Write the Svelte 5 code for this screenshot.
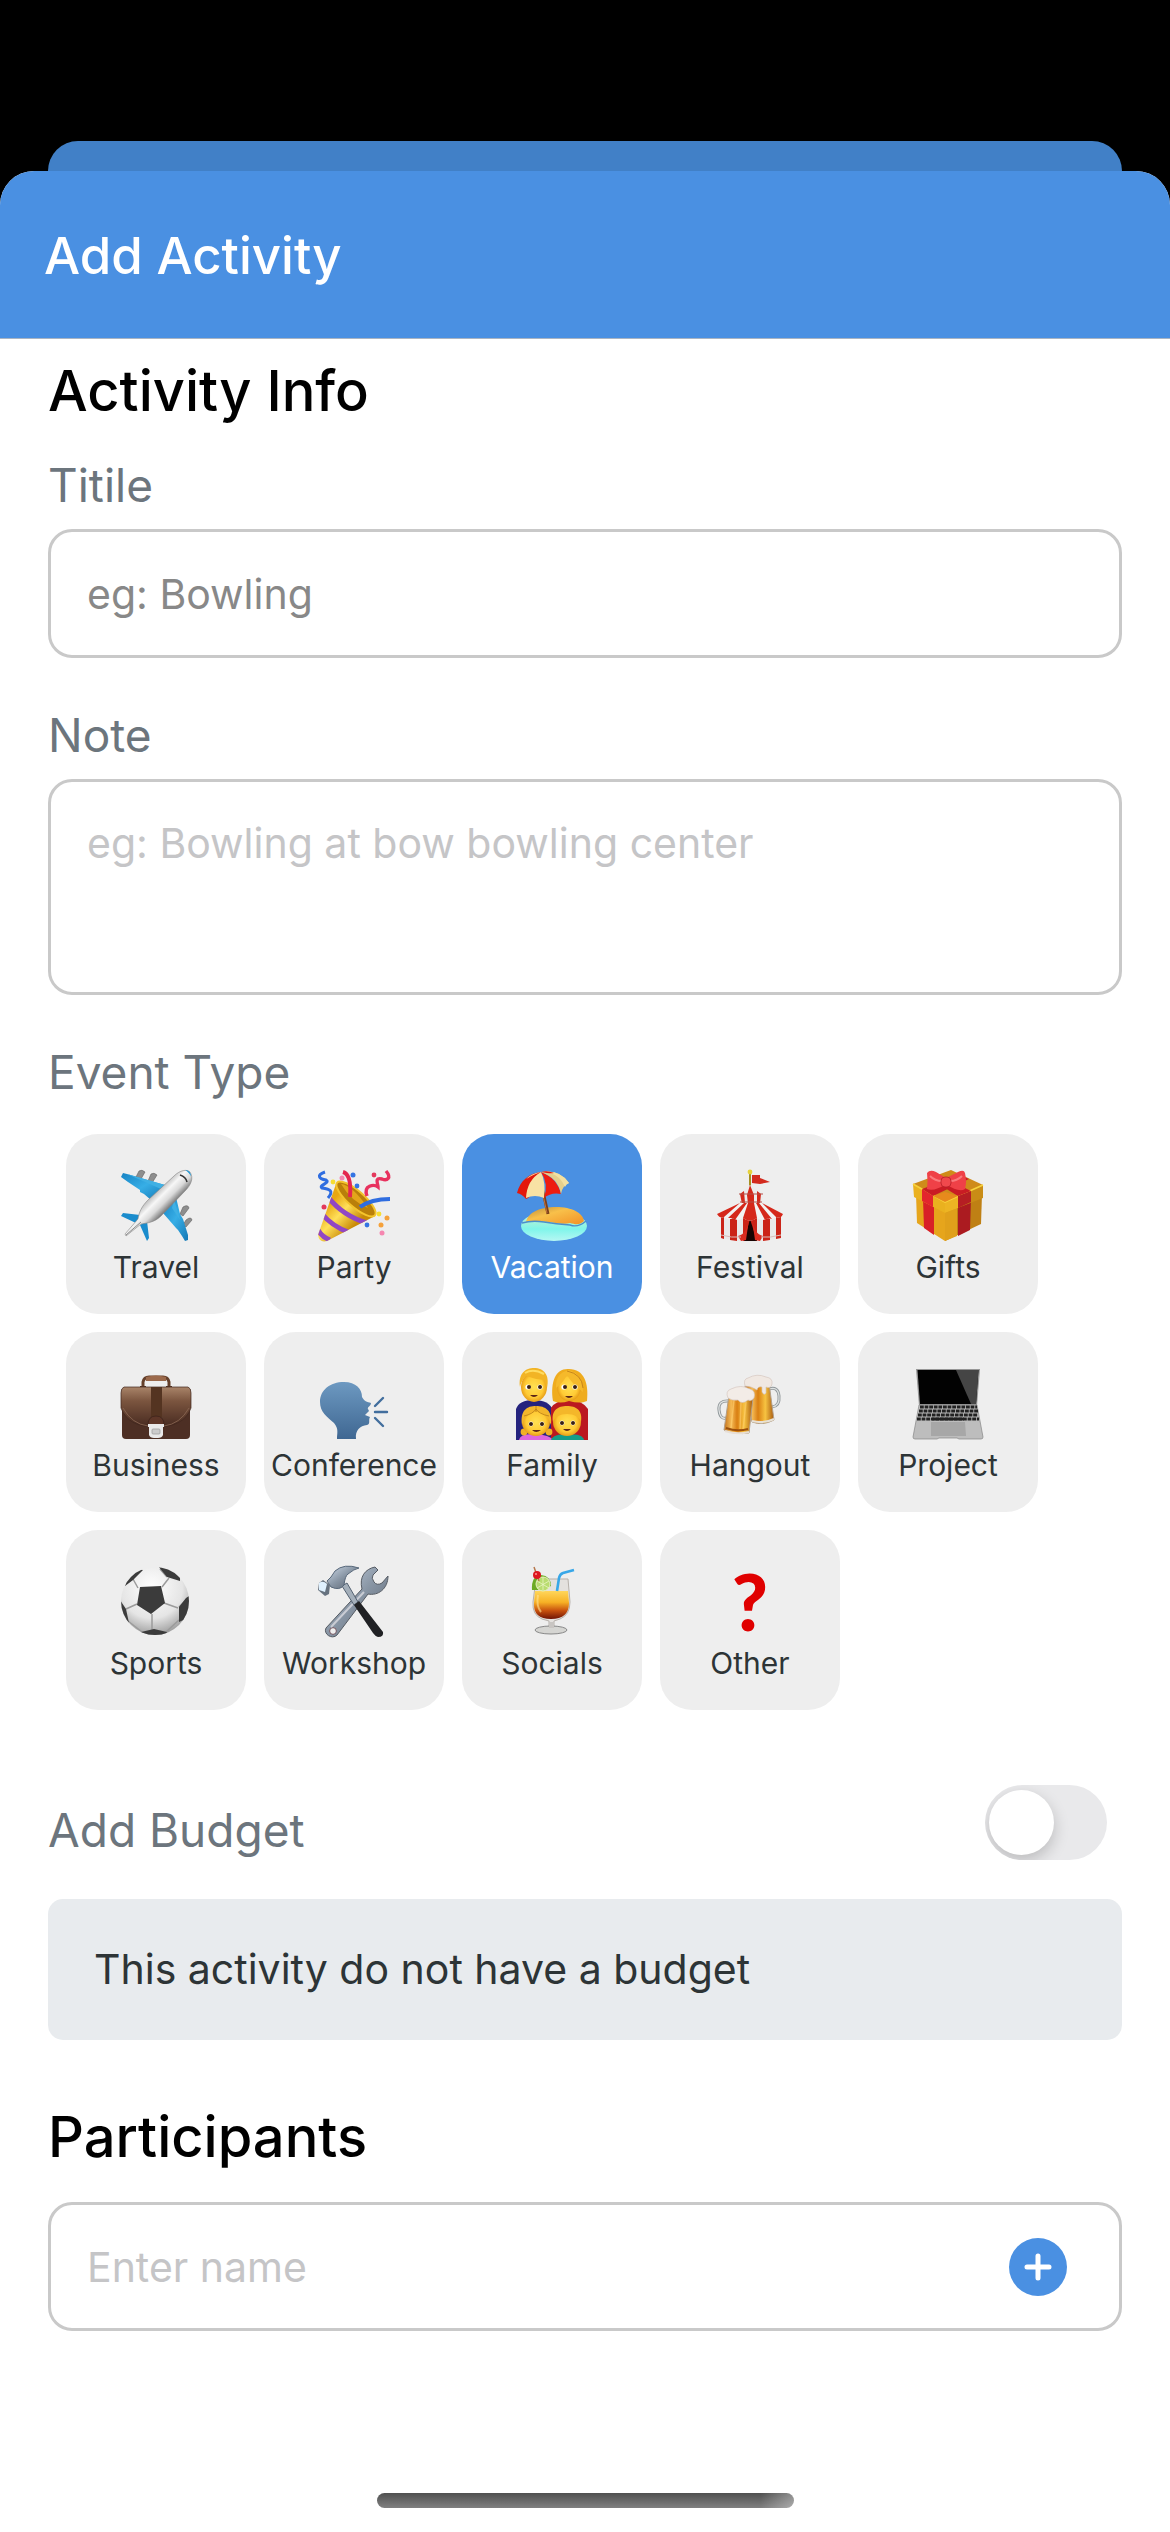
<script>
  const eventTypes = [
    'Travel', 'Party', 'Vacation', 'Festival', 'Gifts',
    'Business', 'Conference', 'Family', 'Hangout', 'Project',
    'Sports', 'Workshop', 'Socials', 'Other'
  ];

  let selected = $state('Vacation');
  let title = $state('');
  let note = $state('');
  let hasBudget = $state(false);
  let participant = $state('');
</script>

{#snippet picture(name)}
  <svg class="picture" viewBox="0 0 72 72" aria-hidden="true">
    {#if name === 'Travel'}
      <defs>
        <linearGradient id="wing" x1="0" y1="0" x2="1" y2="1"><stop offset="0" stop-color="#1683c4" /><stop offset=".5" stop-color="#37aee6" /><stop offset="1" stop-color="#1478b5" /></linearGradient>
        <linearGradient id="hull" gradientUnits="userSpaceOnUse" x1="34" y1="22" x2="50" y2="38"><stop offset="0" stop-color="#b5b5b5" /><stop offset=".35" stop-color="#f7f7f7" /><stop offset=".65" stop-color="#d9d9d9" /><stop offset="1" stop-color="#6e6e6e" /></linearGradient>
      </defs>
      <g fill="#8e8e8e" stroke="#5f5f5f" stroke-width=".6">
        <path d="M16 7 19 1Q22-1 25 2L21 9ZM28 11 31 4Q34 2 37 5L32 13ZM60 44 63 37Q68 34 69 38L63 46ZM63 55 66 50Q71 46 72 50L66 57Z" />
      </g>
      <path d="M1 7 3 3 7 4 45 15 31 30 24 24 20 22 20 20 8 12Z" fill="url(#wing)" />
      <path d="M56 27 60 44 63 49 68 65 68 70 65 71 62 66 58 60 56 58 43 43Z" fill="url(#wing)" />
      <path d="M7 4 45 15 41 19Z" fill="#3fb0e4" />
      <path d="M54 29 60 50 52 38Z" fill="#3fb0e4" />
      <path d="M1 46 3 43 20 45 16 53ZM27 51 29 68 27 71 20 55Z" fill="#1a8ccd" />
      <path d="M70 2C74 8 71 15 65 21L41 46C35 52 28 53 21 54L6 66 5 64 18 49C19 42 22 36 28 30L54 6C60 0 67-1 70 2Z" fill="url(#hull)" stroke="#858585" stroke-width=".6" />
      <path d="M65 0Q71 0 71 7Q70 3 65 0Z" fill="#1793d3" />
      <path d="M60 5Q66 7 67 12" fill="none" stroke="#333" stroke-width="1.6" />
      <path d="m6 65 15-13" stroke="#8b8b8b" />
    {:else if name === 'Party'}
      <defs>
        <linearGradient id="cone" gradientUnits="userSpaceOnUse" x1="12" y1="33" x2="36" y2="56"><stop offset="0" stop-color="#e8a713" /><stop offset=".45" stop-color="#ffe05a" /><stop offset="1" stop-color="#c98a08" /></linearGradient>
        <clipPath id="coneShape"><path d="M18 14 0 65Q1 73 9 71L57 46Z" /></clipPath>
      </defs>
      <path d="M18 14 0 65Q1 73 9 71L57 46Z" fill="url(#cone)" />
      <g clip-path="url(#coneShape)" fill="none" stroke="#9146c4" stroke-width="5">
        <path d="M10 27Q25 46 49 53M4 44Q14 56 30 62M0 60Q4 67 12 70" />
      </g>
      <ellipse cx="38" cy="29" rx="25" ry="8" transform="rotate(41 38 29)" fill="#b97f0a" stroke="#f4c42c" stroke-width="2" />
      <path d="M23 14Q34 15 50 38Q33 31 23 14Z" fill="#e3a51b" />
      <path d="M25 2C32 4 33 14 32 27" fill="none" stroke="#e3274f" stroke-width="4" />
      <path d="M42 37Q53 29 72 29" fill="none" stroke="#2f6de0" stroke-width="4" />
      <path d="M7 2C-2 5 1 9 8 10C13 13 0 15 4 18C12 19 16 21 10 28" fill="none" stroke="#2f6de0" stroke-width="3" />
      <path d="M68 1C74 8 69 11 64 9C56 7 60 14 60 17C56 14 45 15 49 26" fill="none" stroke="#e8315e" stroke-width="3.4" />
      <g fill="#f6dd32"><circle cx="15" cy="12" r="2.4" /><circle cx="61" cy="44" r="2.4" /></g>
      <g fill="#3474e3"><circle cx="35" cy="5" r="2.5" /><circle cx="39" cy="16" r="2.4" /><circle cx="49" cy="55" r="2.4" /></g>
      <g fill="#f5a13a"><circle cx="69" cy="48" r="2.5" /><circle cx="63" cy="55" r="2.5" /></g>
      <g fill="#e3395c"><circle cx="56" cy="5" r="2.4" /><circle cx="6" cy="37" r="2.5" /></g>
      <g fill="#f587b0"><circle cx="24" cy="8" r="2.5" /><circle cx="64" cy="63" r="2.5" /></g>
    {:else if name === 'Vacation'}
      <defs>
        <linearGradient id="sea" x1="0" y1="0" x2="0" y2="1"><stop offset="0" stop-color="#d9efc9" /><stop offset=".6" stop-color="#7ff5ea" /><stop offset="1" stop-color="#b6f7f3" /></linearGradient>
        <linearGradient id="sand" x1="0" y1="0" x2="1" y2="1"><stop offset="0" stop-color="#b98a3a" /><stop offset=".4" stop-color="#f8c04a" /><stop offset="1" stop-color="#f29125" /></linearGradient>
      </defs>
      <ellipse cx="38" cy="56" rx="33" ry="15" fill="url(#sea)" />
      <path d="M10 52C12 42 25 37 40 37C56 37 67 43 68 51C63 56 59 54 54 53C45 56 30 49 10 52Z" fill="url(#sand)" />
      <path d="M6 53Q16 50 28 52T54 55Q62 58 70 51" fill="none" stroke="#4b8ecb" stroke-width="1.4" />
      <path d="m26 17 6 27" stroke="#7b3f1b" stroke-width="3" />
      <path d="m27 25 4 18" stroke="#c2743c" />
      <path d="M1 23C4 11 13 3 25 2Q19 26 10 29Q6 24 1 23Z" fill="#e3170c" />
      <path d="M8 11Q15 3 25 2Q13 6 8 11Z" fill="#f3e0a1" />
      <path d="M25 2Q11 10 10 28Q19 24 28 28Q30 12 25 2Z" fill="#f8e2a4" />
      <path d="M25 2Q33 14 28 28Q35 22 45 24Q41 8 25 2Z" fill="#ed1c10" />
      <path d="M25 2Q42 8 45 24Q46 16 53 13Q44-1 25 2Z" fill="#e5cf8c" />
      <path d="M25 2Q43 2 49 17Q50 14 53 13Q44-1 25 2Z" fill="#f3e0a1" />
      <path d="M25 2Q31 0 38 3 35 4 25 2Z" fill="#e3170c" />
    {:else if name === 'Festival'}
      <path d="M36 2V18" stroke="#a59020" stroke-width="2" />
      <circle cx="36" cy="2" r="2.4" fill="#e5d23d" />
      <path d="M38 5 46 5 46 8 56 12 46 14 38 13Z" fill="#d32a1e" />
      <path d="M36 15 25 24 26 34 48 34 49 24Z" fill="#ececec" />
      <path d="M36 15 33 25 34 34 40 34 40 25ZM30 21 26 24 28 34 31 33ZM43 21 47 24 46 34 43 33Z" fill="#d5281b" />
      <path d="M25 24H49M26 32H48" stroke="#b35149" stroke-width="1.2" />
      <path d="M7 46H67V68Q37 75 7 68Z" fill="#e9e9e9" />
      <path d="M7 47H10V69L7 68ZM16 48H23V71L16 70ZM29 48H43V71H29ZM49 48H56V70L49 71ZM62 47H67V68L62 69Z" fill="#cb2418" />
      <path d="M36 49 30 71H43Z" fill="#170403" />
      <path d="M35 49Q33 64 24 66L27 71 32 70ZM38 49Q40 64 49 66L46 71 41 70Z" fill="#db2c20" />
      <path d="M26 33 3 44Q6 49 10 47Q14 51 19 48Q24 52 29 48Q36 53 43 48Q49 52 54 48Q59 51 62 47Q67 49 69 44L48 33Z" fill="#f2f2f2" />
      <path d="M26 33 3 44Q6 49 10 47ZM30 33 14 48 19 48 21 50 33 33ZM34 33 29 48Q36 53 43 48L40 33ZM42 33 51 50 54 48 58 49 45 33ZM48 33 62 47Q67 49 69 44Z" fill="#d5281b" />
      <path d="M7 65Q18 68 27 67M47 67Q56 68 67 65" fill="none" stroke="#d9bcb9" />
    {:else if name === 'Gifts'}
      <path d="M4 24 33 40V71L5 53Z" fill="#e6a51c" />
      <path d="M33 40 70 24 69 54 33 71Z" fill="#bf8014" />
      <path d="M33 40 45 35V66L33 71Z" fill="#e0a01b" />
      <path d="M11 29 22 35V65L12 58Z" fill="#d82027" />
      <path d="M46 35 59 29 58 60 46 66Z" fill="#ab1b20" />
      <path d="M1 14 39 0 71 15 33 34Z" fill="#cf8b1a" />
      <path d="M1 14 33 32V43L2 27Z" fill="#eab11f" />
      <path d="M33 32 71 15V28L33 43Z" fill="#c98c16" />
      <path d="M33 32 46 26V38L33 43Z" fill="#edb423" />
      <path d="m1 14 32 18 38-17" fill="none" stroke="#f7d23b" stroke-width="1.6" />
      <path d="M10 19 21 26V37L10 31Z" fill="#e3262d" />
      <path d="M46 26 59 21V32L46 38Z" fill="#b51e23" />
      <path d="M10 19 48 5 57 9 21 26ZM18 9 27 5 59 21 46 26Z" fill="#c91c24" />
      <path d="m33 22 13 4-13 6-12-6Z" fill="#e78a1c" />
      <path d="M15 3Q18-1 24 2L34 8 46 2Q52-1 53 3 55 12 53 19 47 23 34 14 22 22 15 19 16 10 15 3Z" fill="#ef4147" />
      <path d="M18 6Q23 11 30 11M50 6Q45 11 38 11" fill="none" stroke="#fa7a7c" stroke-width="2" />
      <rect x="29" y="7" width="10" height="10" rx="4" fill="#f0484d" stroke="#b51f27" stroke-width=".8" />
    {:else if name === 'Business'}
      <defs>
        <linearGradient id="leather" x1="0" y1="0" x2="0" y2="1"><stop offset="0" stop-color="#a98469" /><stop offset=".35" stop-color="#7b553f" /><stop offset="1" stop-color="#472a20" /></linearGradient>
      </defs>
      <path d="M23 20V14Q24 9 29 9H43Q48 9 49 14V20" fill="none" stroke="#65402b" stroke-width="3" />
      <path d="M26 9Q36 6 46 9V13H26Z" fill="#9b694b" />
      <path d="M20 19H26M46 19H52" stroke="#5b3a29" stroke-width="2" />
      <rect x="2" y="22" width="68" height="49" rx="4" fill="#4d2f24" />
      <path d="M4 19H68Q71 20 71 25V40C66 53 55 59 36 59S6 53 1 40V25Q1 20 4 19Z" fill="url(#leather)" stroke="#3f251c" stroke-width=".7" />
      <path d="M3 40Q12 56 28 58M44 58Q60 56 69 40" fill="none" stroke="#8b6854" stroke-width=".8" />
      <rect x="31" y="19" width="11" height="30" fill="#543421" />
      <path d="M28 57Q28 48 36 48T44 57Z" fill="#5d3628" stroke="#39211a" stroke-width=".7" />
      <path d="M28 56H44V59H43V67Q42 70 38 70H34Q30 70 29 67V59H28Z" fill="#e9e9e9" />
      <rect x="32" y="61" width="8" height="5" rx="1" fill="#ccc" stroke="#999" stroke-width=".7" />
    {:else if name === 'Conference'}
      <defs>
        <linearGradient id="speaker" x1="0" y1="0" x2="0" y2="1"><stop offset="0" stop-color="#6d99c1" /><stop offset="1" stop-color="#3f6792" /></linearGradient>
      </defs>
      <path d="M19 71C19 65 21 61 16 55C9 49 2 44 2 34C2 22 12 14 26 14C38 14 44 21 44 29C46 33 49 34 53 35C53 38 49 39 50 41L51 43Q49 45 47 47L52 49C50 52 53 56 49 57C42 58 37 62 38 71Z" fill="url(#speaker)" />
      <path d="m57 38 8-8m-8 14H69M57 50l8 8" fill="none" stroke="#426e9d" stroke-width="2.4" stroke-linecap="round" />
    {:else if name === 'Family'}
      <defs>
        <radialGradient id="skin"><stop offset="0" stop-color="#ffe052" /><stop offset=".7" stop-color="#ffcb35" /><stop offset="1" stop-color="#e79e18" /></radialGradient>
      </defs>
      <path d="M0 72V41Q3 32 18 32T37 42V72Z" fill="#24237e" />
      <path d="M35 72V40Q40 32 53 32T72 41V72Z" fill="#bb1820" />
      <path d="M37 33C34 13 40 0 53 1C68 1 73 15 71 33Q64 36 53 33Q44 36 37 33Z" fill="#efac1e" />
      <ellipse cx="18" cy="19" rx="13" ry="15" fill="url(#skin)" />
      <path d="M4 19C2 5 10 0 18 0C28 0 34 7 31 20L28 12Q18 11 10 8 5 13 4 19Z" fill="#f2b425" />
      <path d="M9 5Q17 0 28 6" fill="none" stroke="#ffdc60" stroke-width="2" />
      <ellipse cx="53" cy="19" rx="12" ry="14" fill="url(#skin)" />
      <path d="M40 20Q39 5 53 2 67 6 67 24 56 16 51 7 47 15 40 20Z" fill="#f5b92b" />
      <path d="M51 3Q66 6 67 20" fill="none" stroke="#ba7719" stroke-width=".8" />
      <path d="M3 72Q4 65 19 66T37 72Z" fill="#dc65dc" />
      <path d="M35 72Q37 66 52 66T68 72Z" fill="#159c88" />
      <circle cx="8" cy="64" r="3.4" fill="#f0b027" /><circle cx="33" cy="64" r="3.4" fill="#f0b027" />
      <circle cx="20" cy="54" r="14" fill="url(#skin)" />
      <path d="M6 57C4 42 11 38 20 38S37 42 35 57Q32 46 20 43 9 46 6 57Z" fill="#f3b62b" />
      <path d="M20 38V44M8 48Q17 46 20 41 23 46 33 48" fill="none" stroke="#b77c18" stroke-width=".8" />
      <circle cx="51" cy="54" r="14" fill="url(#skin)" />
      <path d="M37 54C35 42 42 38 51 38S67 42 65 54Q62 46 51 46 40 46 37 54Z" fill="#f4b72a" />
      <g fill="#fff"><circle cx="12" cy="19" r="2.6" /><circle cx="24" cy="19" r="2.6" /><circle cx="48" cy="19" r="2.6" /><circle cx="59" cy="19" r="2.6" /><circle cx="15" cy="56" r="2.4" /><circle cx="26" cy="56" r="2.4" /><circle cx="46" cy="55" r="2.4" /><circle cx="57" cy="55" r="2.4" /></g>
      <g fill="#3a2112"><circle cx="13" cy="19" r="2" /><circle cx="24" cy="19" r="2" /><circle cx="49" cy="19" r="2" /><circle cx="59" cy="19" r="2" /><circle cx="15" cy="56" r="2" /><circle cx="26" cy="56" r="2" /><circle cx="46" cy="55" r="2" /><circle cx="57" cy="55" r="2" /></g>
      <path d="M14 27H22Q18 31 14 27ZM49 28H57Q53 32 49 28ZM16 62H25Q20 66 16 62ZM47 61H55Q51 65 47 61Z" fill="#5b2516" />
    {:else if name === 'Hangout'}
      <defs>
        <linearGradient id="beer" x1="0" y1="0" x2="1" y2="0"><stop offset="0" stop-color="#c2701c" /><stop offset=".25" stop-color="#f5bb55" /><stop offset=".45" stop-color="#d97f13" /><stop offset=".7" stop-color="#f7c341" /><stop offset="1" stop-color="#a7590f" /></linearGradient>
      </defs>
      <path d="M55 21Q64 18 65 28T58 39" fill="none" stroke="#8f9699" stroke-width="3" />
      <path d="M55 21Q64 18 65 28T58 39" fill="none" stroke="#dce0e0" stroke-width="1.2" />
      <path d="m31 18 24-3 5 37Q49 58 38 54Z" fill="url(#beer)" stroke="#b3a089" stroke-width="1" />
      <path d="M38 53Q50 56 60 51" fill="none" stroke="#e7e1d7" stroke-width="2" />
      <path d="M31 18Q29 11 34 10 43 5 52 9 59 10 58 16 57 21 52 19V25Q50 28 48 24V19Q44 18 43 22 37 18 31 18Z" fill="#f0e8e2" stroke="#d1c1b8" stroke-width=".6" />
      <path d="M15 33Q4 32 5 42T13 50" fill="none" stroke="#8f9699" stroke-width="3" />
      <path d="M15 33Q4 32 5 42T13 50" fill="none" stroke="#e1e4e4" stroke-width="1.2" />
      <path d="m15 27 24 3-4 35Q22 67 10 62Z" fill="url(#beer)" stroke="#b3a089" stroke-width="1" />
      <path d="m20 32-3 28m10-27-1 28m6-27-3 28" stroke="#ffcf70" stroke-opacity=".6" stroke-width="1.5" />
      <path d="M12 60Q23 64 34 61" fill="none" stroke="#9a4f0c" stroke-width="2" />
      <path d="M11 63Q23 67 35 64" fill="none" stroke="#e8dfd5" stroke-width="2" />
      <path d="M14 30Q11 23 17 21 27 16 36 21 42 23 40 30 37 34 34 32 28 37 24 32 18 33 14 30Z" fill="#f3ece7" stroke="#d1c1b8" stroke-width=".6" />
    {:else if name === 'Project'}
      <path d="M4 1H68L65 38H7Z" fill="#979797" />
      <path d="M5.500 2H66.500L64 36H8Z" fill="#020202" />
      <path d="M44 2H66.500L64 36H59Z" fill="#454545" />
      <path d="M7 37H65L71 69Q71 71 69 71H47L45 70H27L25 71H3Q1 71 1 69Z" fill="#bdbdbd" stroke="#858585" stroke-width=".7" />
      <g stroke="#222" stroke-width="2.800" stroke-dasharray="3.800 .8"><path d="M8 39H65M7 43H66M6 47H66M5 51H67" /></g>
      <path d="M20 51H52" stroke="#222" stroke-width="2.800" />
      <path d="M19 54H53L54 68H19Z" fill="#a7a7a7" />
    {:else if name === 'Sports'}
      <defs>
        <radialGradient id="ball" cx=".45" cy=".3" r=".7"><stop offset="0" stop-color="#fff" /><stop offset=".65" stop-color="#e5e5e5" /><stop offset="1" stop-color="#a0a0a0" /></radialGradient>
        <clipPath id="ballShape"><circle cx="35" cy="35" r="34" /></clipPath>
      </defs>
      <circle cx="35" cy="35" r="34" fill="url(#ball)" />
      <g clip-path="url(#ballShape)">
        <path d="m18 22-5-9m29 8 7-9m-5 25 14 5M32 48v16M17 38 6 43M13 13 7 17M47 11l-7-8m19 38 10-10M59 54 46 66M8 55 22 66" fill="none" stroke="#9b9b9b" stroke-width="1.500" />
        <path d="M20 21 41 20 45 37 31 48 17 39ZM38 0 47 11 60 15 60 5ZM5 20 13 14 23 4 10 2ZM72 28 66 32 59 41 59 56 72 50ZM0 34 6 43 9 57-2 52ZM21 66 34 63 47 66 44 72 24 72Z" fill="#3b3b3b" />
      </g>
    {:else if name === 'Workshop'}
      <defs>
        <linearGradient id="steel" x1="0" y1="0" x2="1" y2="1"><stop offset="0" stop-color="#cfdbe9" /><stop offset=".5" stop-color="#8794a3" /><stop offset="1" stop-color="#555e6b" /></linearGradient>
      </defs>
      <path d="M57 1C47 3 41 11 44 23L8 62C5 68 14 74 19 69L50 28C60 30 70 23 70 10L64 17Q59 20 56 16T55 9L60 4Z" fill="url(#steel)" stroke="#555b63" stroke-width="1" />
      <circle cx="15" cy="65" r="3.400" fill="#eee" stroke="#70525c" stroke-width="1" />
      <path d="m46 26-33 35" stroke="#c9ccd4" stroke-width="2" />
      <path d="m24 20 5-3 11 19-4 3Z" fill="#a4afba" stroke="#536171" stroke-width="1" />
      <path d="m36 39 5-4 24 31Q66 71 60 71Q57 70 55 67Z" fill="#202124" />
      <path d="M41 2Q26-3 17 5Q13 12 9 15L13 21Q22 25 26 19Q27 10 30 8Q36 3 41 2Z" fill="url(#steel)" stroke="#58687a" stroke-width="1" />
      <path d="m1 17 4-3 7 5-1 9-4 2-7-6Z" fill="#66727f" />
      <path d="M1 17Q5 14 9 18L7 26 1 24Z" fill="#dff1ff" />
    {:else if name === 'Socials'}
      <defs>
        <linearGradient id="drink" x1="0" y1="0" x2="0" y2="1"><stop offset="0" stop-color="#ffd65b" /><stop offset=".4" stop-color="#f7b225" /><stop offset=".7" stop-color="#c8510e" /><stop offset="1" stop-color="#701405" /></linearGradient>
      </defs>
      <path d="M20 13H52L54 36Q54 49 44 53L38 55V61H33V55L26 53Q16 49 17 36Z" fill="#e4e1de" stroke="#b7b1ab" stroke-width="1" />
      <path d="M19 25H52L53 37Q53 53 35 53T18 37Z" fill="url(#drink)" />
      <path d="M22 29Q20 40 25 46" fill="none" stroke="#ffe394" stroke-width="2" stroke-opacity=".6" />
      <ellipse cx="35" cy="64" rx="16" ry="4" fill="#d5d5d2" stroke="#888" stroke-width="1" />
      <path d="M33 56H38V62H33Z" fill="#c8c5c2" />
      <path d="M16 24Q15 10 25 9Q35 10 35 20L26 24Z" fill="#6caa24" />
      <circle cx="27" cy="18" r="7" fill="#b9dc70" stroke="#e8efc0" stroke-width="1" />
      <path d="m27 11v13m-6-9 12 7m0-7-12 7" stroke="#eaf4c4" stroke-width=".8" />
      <path d="m18 1 5 14" stroke="#b6784c" stroke-width="1.500" />
      <circle cx="21" cy="9" r="4" fill="#dd1720" /><circle cx="20" cy="8" r="1" fill="#ff9696" />
      <path d="m41 25 2-13Q44 8 47 7L58 4" fill="none" stroke="#38a7e8" stroke-width="2.600" />
    {:else}
      <text class="query" x="36" y="65" text-anchor="middle">?</text>
    {/if}
  </svg>
{/snippet}

<div class="screen">
  <div class="behind"></div>
  <main class="sheet">
    <header><h1>Add Activity</h1></header>

    <form onsubmit={(e) => e.preventDefault()}>
      <h2>Activity Info</h2>

      <div class="field first">
        <label for="title">Titile</label>
        <input id="title" class="box strong" type="text" placeholder="eg: Bowling" bind:value={title} />
      </div>

      <div class="field">
        <label for="note">Note</label>
        <textarea id="note" class="box" placeholder="eg: Bowling at bow bowling center" bind:value={note}></textarea>
      </div>

      <div class="types-label" id="types">Event Type</div>
      <div class="types" role="group" aria-labelledby="types">
        {#each eventTypes as name}
          <button
            type="button"
            class="tile"
            class:selected={selected === name}
            aria-pressed={selected === name}
            onclick={() => (selected = name)}
          >
            {@render picture(name)}
            <span>{name}</span>
          </button>
        {/each}
      </div>

      <div class="budget">
        <label for="budget">Add Budget</label>
        <input id="budget" class="switch" type="checkbox" role="switch" bind:checked={hasBudget} />
      </div>
      <p class="notice">This activity do not have a budget</p>

      <h2 class="people"><label for="participant">Participants</label></h2>
      <div class="box adder">
        <input id="participant" type="text" placeholder="Enter name" bind:value={participant} />
        <button type="button" class="add" aria-label="Add participant">
          <svg viewBox="0 0 58 58" aria-hidden="true"><path d="M29 18V40M18 29H40" /></svg>
        </button>
      </div>
    </form>

    <div class="home"></div>
  </main>
</div>

<style>
  :global(body) {
    margin: 0;
    background: #000;
  }

  .screen,
  .screen * {
    box-sizing: border-box;
  }

  .screen {
    display: flex;
    flex-direction: column;
    min-height: 100vh;
    padding-top: 141px;
    background: #000;
    color: #2d3436;
    font-family: Inter, 'Liberation Sans', sans-serif;
  }

  .behind {
    height: 66px;
    margin: 0 48px -36px;
    border-radius: 30px 30px 0 0;
    background: #4180c7;
  }

  .sheet {
    position: relative;
    display: flex;
    flex: 1;
    flex-direction: column;
    overflow: hidden;
    border-radius: 34px 34px 0 0;
    background: #fff;
  }

  header {
    display: flex;
    align-items: center;
    height: 168px;
    padding: 2px 44px 0;
    border-bottom: 1px solid #a9b4c2;
    background: #4a90e2;
  }

  h1,
  h2,
  p {
    margin: 0;
  }

  h1 {
    color: #fff;
    font-size: 51px;
    font-weight: 500;
    line-height: 72px;
  }

  form {
    padding: 16px 48px 0;
  }

  h2 {
    color: #000;
    font-size: 56px;
    font-weight: 500;
    line-height: 72px;
  }

  .field {
    display: flex;
    flex-direction: column;
    gap: 14px;
    margin-top: 47px;
  }

  .field.first {
    margin-top: 28px;
  }

  .field label,
  .types-label,
  .budget label {
    color: #6c757d;
    font-size: 46px;
    line-height: 60px;
  }

  .box {
    width: 100%;
    height: 129px;
    padding: 0 36px;
    border: 3px solid #c9c9c9;
    border-radius: 24px;
    background: #fff;
    color: #2d3436;
    font: 41px/50px Inter, 'Liberation Sans', sans-serif;
    outline: none;
  }

  textarea.box {
    height: 216px;
    padding-top: 36px;
    resize: none;
  }

  ::placeholder {
    color: #c5c5c7;
    opacity: 1;
  }

  .strong::placeholder {
    color: #888;
  }

  .types-label {
    margin-top: 47px;
  }

  .types {
    display: flex;
    flex-wrap: wrap;
    gap: 18px;
    margin-top: 32px;
    padding: 0 18px;
  }

  .tile {
    display: flex;
    flex-direction: column;
    align-items: center;
    gap: 5px;
    width: 180px;
    height: 180px;
    padding: 36px 0 0;
    border: 0;
    border-radius: 32px;
    background: #eee;
    color: #2d3436;
    font: 30px/40px Inter, 'Liberation Sans', sans-serif;
  }

  .tile.selected {
    background: #4a90e2;
    color: #fff;
  }

  .picture {
    display: block;
    flex: none;
    width: 72px;
    height: 72px;
    overflow: visible;
  }

  .query {
    fill: #e00000;
    font: 900 78px Lato, 'Noto Sans', sans-serif;
  }

  .budget {
    display: flex;
    align-items: flex-end;
    justify-content: space-between;
    margin-top: 75px;
    padding-right: 15px;
  }

  .switch {
    width: 122px;
    height: 75px;
    margin: 0;
    padding: 5px 4px;
    overflow: hidden;
    border-radius: 38px;
    background: #e9e9eb;
    appearance: none;
  }

  .switch::before {
    display: block;
    width: 65px;
    height: 65px;
    border-radius: 50%;
    background: #fff;
    box-shadow: 0 6px 16px rgb(0 0 0 / 20%);
    content: '';
  }

  .switch:checked {
    background: #4a90e2;
  }

  .switch:checked::before {
    margin-left: auto;
  }

  .notice {
    margin-top: 39px;
    padding: 45px 46px 46px;
    border-radius: 15px;
    background: #e8ebee;
    font-size: 41px;
    line-height: 50px;
  }

  .people {
    margin-top: 61px;
  }

  .adder {
    display: flex;
    align-items: center;
    margin-top: 29px;
    padding-right: 52px;
  }

  .adder input {
    flex: 1;
    min-width: 0;
    padding: 0;
    border: 0;
    background: none;
    color: inherit;
    font: inherit;
    outline: none;
  }

  .add {
    width: 58px;
    height: 58px;
    padding: 0;
    border: 0;
    border-radius: 50%;
    background: #4a90e2;
  }

  .add svg {
    display: block;
    fill: none;
    stroke: #fff;
    stroke-linecap: round;
    stroke-width: 5;
  }

  .home {
    width: 417px;
    height: 15px;
    margin: auto auto 24px;
    border-radius: 8px;
    background:
      linear-gradient(90deg, transparent 92%, rgb(255 255 255 / 35%)),
      linear-gradient(#505050, #808080);
  }
</style>
